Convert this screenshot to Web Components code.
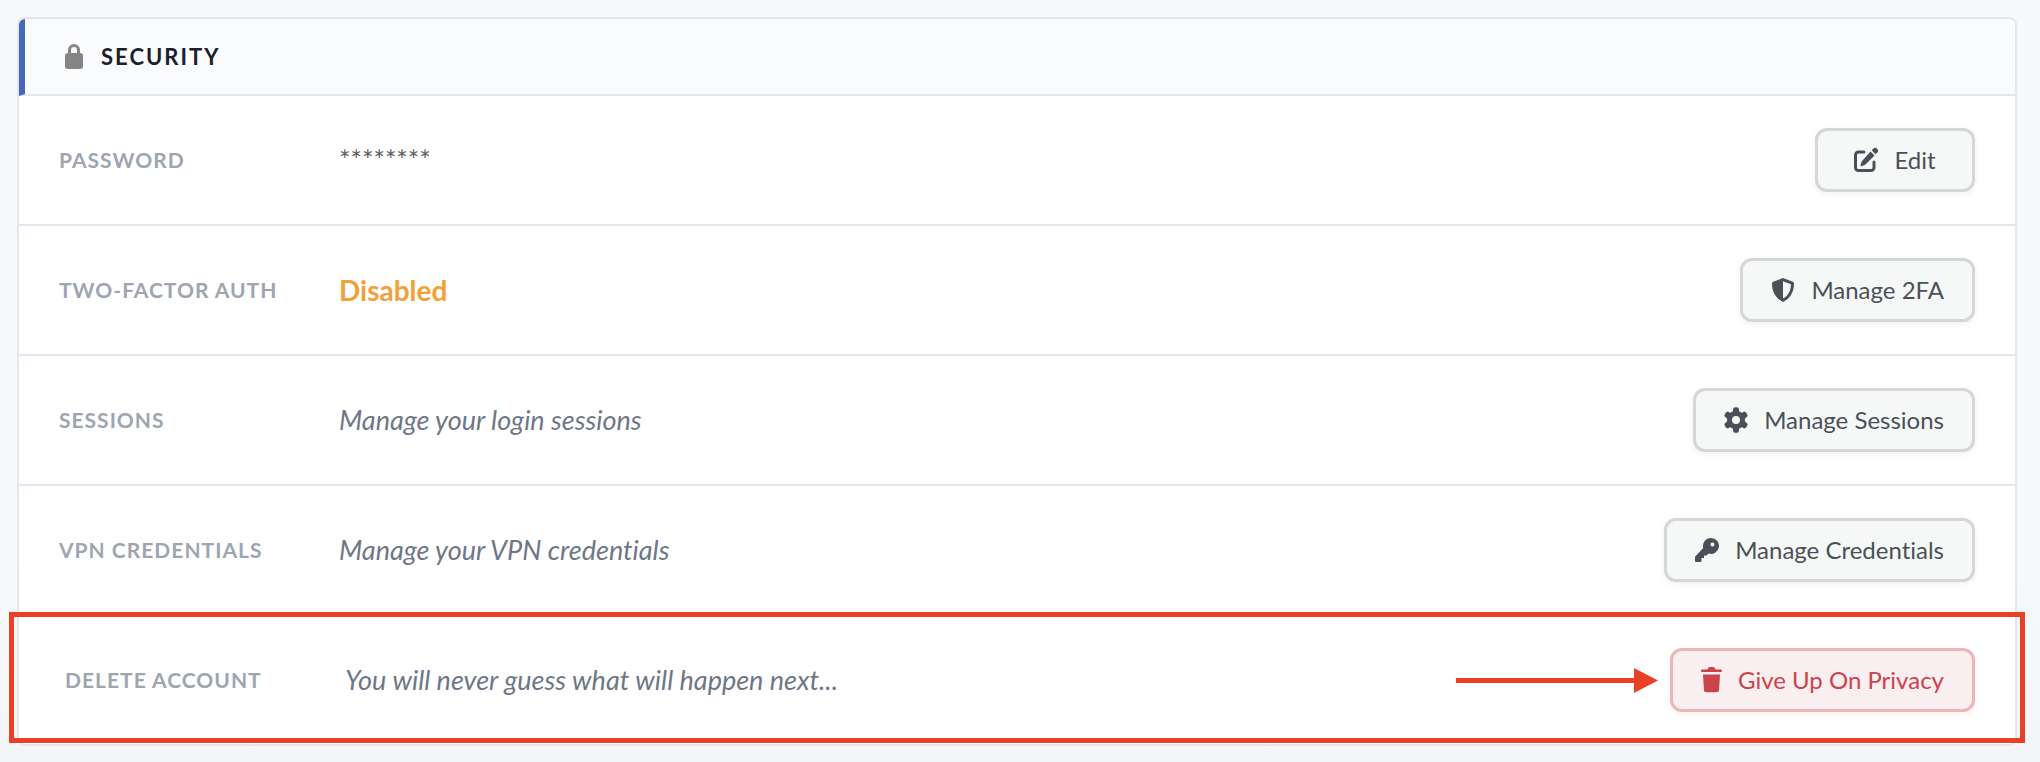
<!DOCTYPE html>
<html lang="en">
<head>
<meta charset="utf-8">
<meta name="viewport" content="width=device-width, initial-scale=1">
<title>Security</title>
<style>
  body {
    margin: 0;
    min-height: 100vh;
    background: linear-gradient(#f8f9fb 0%, #f8f9fb 70%, #f4f5f8 100%);
    font-family: Lato, "Liberation Sans", sans-serif;
    font-variant-ligatures: none;
  }
</style>
</head>
<body>
<settings-card heading="Security">
  <settings-row label="Password">
    <span slot="value">********</span>
    <action-button slot="action" icon="edit">Edit</action-button>
  </settings-row>
  <settings-row label="Two-Factor Auth" tone="warning">
    <span slot="value">Disabled</span>
    <action-button slot="action" icon="shield">Manage 2FA</action-button>
  </settings-row>
  <settings-row label="Sessions" tone="hint">
    <span slot="value">Manage your login sessions</span>
    <action-button slot="action" icon="gear">Manage Sessions</action-button>
  </settings-row>
  <settings-row label="VPN Credentials" tone="hint">
    <span slot="value">Manage your VPN credentials</span>
    <action-button slot="action" icon="key">Manage Credentials</action-button>
  </settings-row>
  <settings-row label="Delete Account" tone="hint" marked>
    <span slot="value">You will never guess what will happen next...</span>
    <marker-arrow slot="action"></marker-arrow>
    <action-button slot="action" icon="trash" variant="danger">Give Up On Privacy</action-button>
  </settings-row>
</settings-card>

<script>
// Icon drawings, all 26 high.
const icons = {
  lock: '<path fill-rule="evenodd" d="M3 9V6a6 6 0 0 1 12 0V9a3 3 0 0 1 3 3v10a3 3 0 0 1-3 3H3a3 3 0 0 1-3-3V12a3 3 0 0 1 3-3zM6 9h6V6a3 3 0 0 0-6 0z"/>',
  edit: '<path d="M10 5H4.500A3 3 0 0 0 1.500 8v12.500a3 3 0 0 0 3 3H17a3 3 0 0 0 3-3V15" fill="none" stroke="currentColor" stroke-width="3" stroke-linecap="round"/><path d="M16.500 4.500l4 4-8.500 8.500c-1.500 1.500-3.500 2-5.500 2.200.2-2 .7-4.200 2-5.700zM17.700 3.300l1.500-1.500a2.500 2.500 0 0 1 4 3.800l-1.600 1.700z"/>',
  shield: '<path fill-rule="evenodd" d="M12 1l9.800 3.700c.8.300 1.200.9 1.200 1.800 0 8.500-4 15.200-11 18.500C5 21.700 1 15 1 6.500c0-.9.400-1.500 1.200-1.800zM12 4.200v17.300c5-2.600 7.800-7.500 8-14.300z"/>',
  gear: '<path fill-rule="evenodd" d="M9.500.800Q12-.300 14.500.800L15.300 4.500 17.300 5.700 21 4.500Q23.200 6.200 23.700 9L20.900 11.700V14.300L23.700 17Q23.200 19.800 21 21.500L17.300 20.300 15.300 21.500 14.500 25.200Q12 26.300 9.500 25.200L8.700 21.500 6.700 20.300 3 21.500Q.8 19.800.3 17L3.100 14.300V11.700L.3 9Q.8 6.200 3 4.500L6.700 5.700 8.700 4.500zM12 9a4 4 0 1 0 0 8 4 4 0 0 0 0-8z"/>',
  key: '<path fill-rule="evenodd" d="M16 1a8 8 0 1 1-2.500 15.600L11.500 18.600H9V21H6.500V24a1 1 0 0 1-1 1H1a1 1 0 0 1-1-1V19.700L8.200 11A8 8 0 0 1 16 1zM17.500 5.500a2 2 0 1 0 0 4 2 2 0 0 0 0-4z"/>',
  trash: '<path d="M1.200 2.500h5.300L7.400.8C7.700.3 8 0 8.700 0h3.600c.7 0 1 .3 1.300.8l.9 1.700h5.300a1.200 1.200 0 0 1 0 2.500H1.200a1.200 1.200 0 0 1 0-2.500zM2 7.500h17l-1 15.800a2.200 2.200 0 0 1-2.200 2H5.200a2.200 2.200 0 0 1-2.200-2z"/>'
}

customElements.define('settings-card',
  /**
   * A bordered card with a heading bar and a list of rows.
   */
  class extends HTMLElement {
    constructor () {
      super()
      this.attachShadow({ mode: 'open' }).innerHTML = `
        <style>
          :host {
            display: block;
            padding: 17px 23px 16px 17px;
          }
          section {
            border: 2px solid #e2e7ed;
            border-radius: 8px;
            background: #fff;
          }
          header {
            display: flex;
            align-items: center;
            gap: 18px;
            padding: 23px 40px 22px;
            border-left: 6px solid #4568b8;
            border-bottom: 2px solid #e2e7ed;
            border-radius: 6px 6px 0 0;
            background: #fafbfd;
            color: #1a202c;
          }
          svg {
            width: 18px;
            height: 26px;
            fill: #858585;
          }
          h2 {
            margin: 0;
            font-size: 22px;
            line-height: 30px;
            font-weight: 700;
            letter-spacing: 2px;
            text-transform: uppercase;
          }
        </style>
        <section>
          <header>
            <svg viewBox="0 0 18 26" aria-hidden="true">${icons.lock}</svg>
            <h2>${this.getAttribute('heading')}</h2>
          </header>
          <slot></slot>
        </section>`
    }
  }
)

customElements.define('settings-row',
  /**
   * One setting: its label, its value and the action at the right.
   */
  class extends HTMLElement {
    constructor () {
      super()
      this.attachShadow({ mode: 'open' }).innerHTML = `
        <style>
          :host {
            display: flex;
            align-items: center;
            box-sizing: border-box;
            position: relative;
            padding: 32px 40px;
            border-bottom: 2px solid #e2e7ed;
          }
          :host(:last-child) {
            border-bottom: 0;
          }
          :host([marked]) {
            border-left: 6px solid transparent;
          }
          :host([marked])::after {
            content: "";
            position: absolute;
            inset: -4px -10px 1px -16px;
            border: 5px solid #ea4025;
            pointer-events: none;
          }
          .label {
            width: 280px;
            color: #9ea5b1;
            font-size: 21px;
            line-height: 30px;
            font-weight: 700;
            letter-spacing: 1px;
            text-transform: uppercase;
          }
          .value {
            flex: 1;
            color: #606060;
            font-size: 27px;
            line-height: 36px;
          }
          :host([tone="warning"]) .value {
            color: #f2a03a;
            font-size: 28px;
            font-weight: 700;
          }
          :host([tone="hint"]) .value {
            color: #6e7787;
            font-style: italic;
          }
          .action {
            display: flex;
            align-items: center;
            gap: 12px;
          }
        </style>
        <div class="label">${this.getAttribute('label')}</div>
        <div class="value"><slot name="value"></slot></div>
        <div class="action"><slot name="action"></slot></div>`
    }
  }
)

customElements.define('action-button',
  /**
   * A button with an icon before its text.
   */
  class extends HTMLElement {
    constructor () {
      super()
      const icon = this.getAttribute('icon')
      const width = icon === 'trash' ? 21 : 24

      this.attachShadow({ mode: 'open' }).innerHTML = `
        <style>
          :host {
            display: block;
          }
          button {
            display: flex;
            align-items: center;
            justify-content: center;
            gap: 16px;
            box-sizing: border-box;
            min-width: 160px;
            height: 64px;
            padding: 0 28px;
            border: 3px solid #d4d6d7;
            border-radius: 12px;
            background: #f6f8f8;
            box-shadow: 0 2px 6px rgba(0, 0, 0, 0.06);
            color: #4b5058;
            font-family: inherit;
            font-size: 24px;
            font-variant-ligatures: none;
            line-height: 32px;
            white-space: nowrap;
            cursor: pointer;
          }
          :host([variant="danger"]) button {
            border-color: #eab6ba;
            background: #f9eef0;
            box-shadow: 0 2px 6px rgba(203, 67, 75, 0.1);
            color: #cb434b;
          }
          svg {
            fill: currentColor;
          }
        </style>
        <button type="button">
          <svg width="${width}" height="26" viewBox="0 0 ${width} 26" aria-hidden="true">${icons[icon]}</svg>
          <span><slot></slot></span>
        </button>`
    }
  }
)

customElements.define('marker-arrow',
  /**
   * A red arrow that points at the next item.
   */
  class extends HTMLElement {
    constructor () {
      super()
      this.attachShadow({ mode: 'open' }).innerHTML = `
        <style>
          :host {
            display: block;
          }
          svg {
            display: block;
            width: 202px;
            height: 28px;
            fill: #ea4025;
          }
        </style>
        <svg viewBox="0 0 202 28" aria-hidden="true"><path d="M0 12h178V2l24 12.500L178 27V17H0z"/></svg>`
    }
  }
)
</script>
</body>
</html>
